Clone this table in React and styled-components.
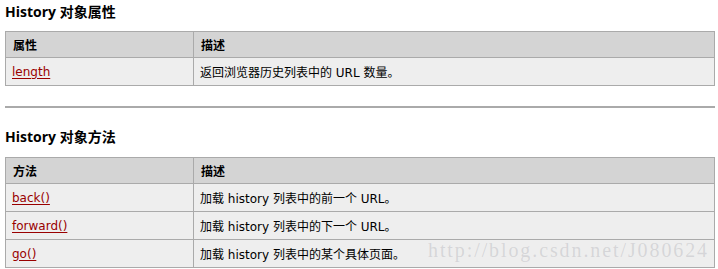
import React from "react";
import styled, { createGlobalStyle } from "styled-components";

const GlobalStyle = createGlobalStyle`
  html, body {
    margin: 0;
    padding: 0;
    background: #ffffff;
  }
  body {
    font-family: "DejaVu Sans", "Noto Sans CJK SC", sans-serif;
    color: #000;
  }
`;

const Page = styled.div`
  padding: 0 3px 0 5px;
  width: 710px;
`;

const Heading = styled.h2`
  margin: ${(p) => p.$top}px 0 ${(p) => p.$bottom}px;
  font-family: "Open Sans", "Noto Sans CJK SC", sans-serif;
  font-size: 14px;
  line-height: 20px;
  font-weight: 700;
  color: #000;
`;

const Section = styled.div`
  position: relative;
`;

const Table = styled.table`
  width: 710px;
  border-collapse: collapse;
  table-layout: fixed;
  font-size: 12px;
`;

const HeadCell = styled.th`
  width: ${(p) => (p.$first ? "173px" : "auto")};
  height: 25px;
  padding: 0 7px;
  text-align: left;
  vertical-align: middle;
  background: #d4d4d4;
  border: 1px solid #aaaaaa;
  font-family: "DejaVu Sans", "Noto Sans CJK SC", sans-serif;
  font-weight: 700;
  font-size: 12px;
`;

const Cell = styled.td`
  height: 27px;
  padding: 0 6px;
  vertical-align: middle;
  background: #eeeeee;
  border: 1px solid #aaaaaa;
  font-family: "DejaVu Sans", "Noto Sans CJK SC", sans-serif;
  font-size: 12px;
  white-space: nowrap;
`;

const Link = styled.a`
  color: #990000;
  text-decoration: underline;
  text-underline-offset: 2px;
`;

const Rule = styled.hr`
  margin: 20px 0 0;
  height: 2px;
  border: 0;
  background: #aaaaaa;
`;

/* blog address stamped over the lower right of the methods table */
const Watermark = styled.span`
  position: absolute;
  right: 6px;
  bottom: 6px;
  font-family: "Liberation Serif", serif;
  font-size: 20px;
  letter-spacing: 1.9px;
  color: rgba(150, 150, 160, 0.28);
  pointer-events: none;
  white-space: nowrap;
`;

const properties = [
  { name: "length", desc: "返回浏览器历史列表中的 URL 数量。" },
];

const methods = [
  { name: "back()", desc: "加载 history 列表中的前一个 URL。" },
  { name: "forward()", desc: "加载 history 列表中的下一个 URL。" },
  { name: "go()", desc: "加载 history 列表中的某个具体页面。" },
];

function RefTable({ first, rows }) {
  return (
    <Table>
      <thead>
        <tr>
          <HeadCell $first>{first}</HeadCell>
          <HeadCell>描述</HeadCell>
        </tr>
      </thead>
      <tbody>
        {rows.map((r) => (
          <tr key={r.name}>
            <Cell>
              <Link href="#">{r.name}</Link>
            </Cell>
            <Cell>{r.desc}</Cell>
          </tr>
        ))}
      </tbody>
    </Table>
  );
}

export default function App() {
  return (
    <>
      <GlobalStyle />
      <Page>
        <Heading $top={2} $bottom={9}>History 对象属性</Heading>
        <RefTable first="属性" rows={properties} />
        <Rule />
        <Heading $top={19} $bottom={10}>History 对象方法</Heading>
        <Section>
          <RefTable first="方法" rows={methods} />
          <Watermark>http://blog.csdn.net/J080624</Watermark>
        </Section>
      </Page>
    </>
  );
}
